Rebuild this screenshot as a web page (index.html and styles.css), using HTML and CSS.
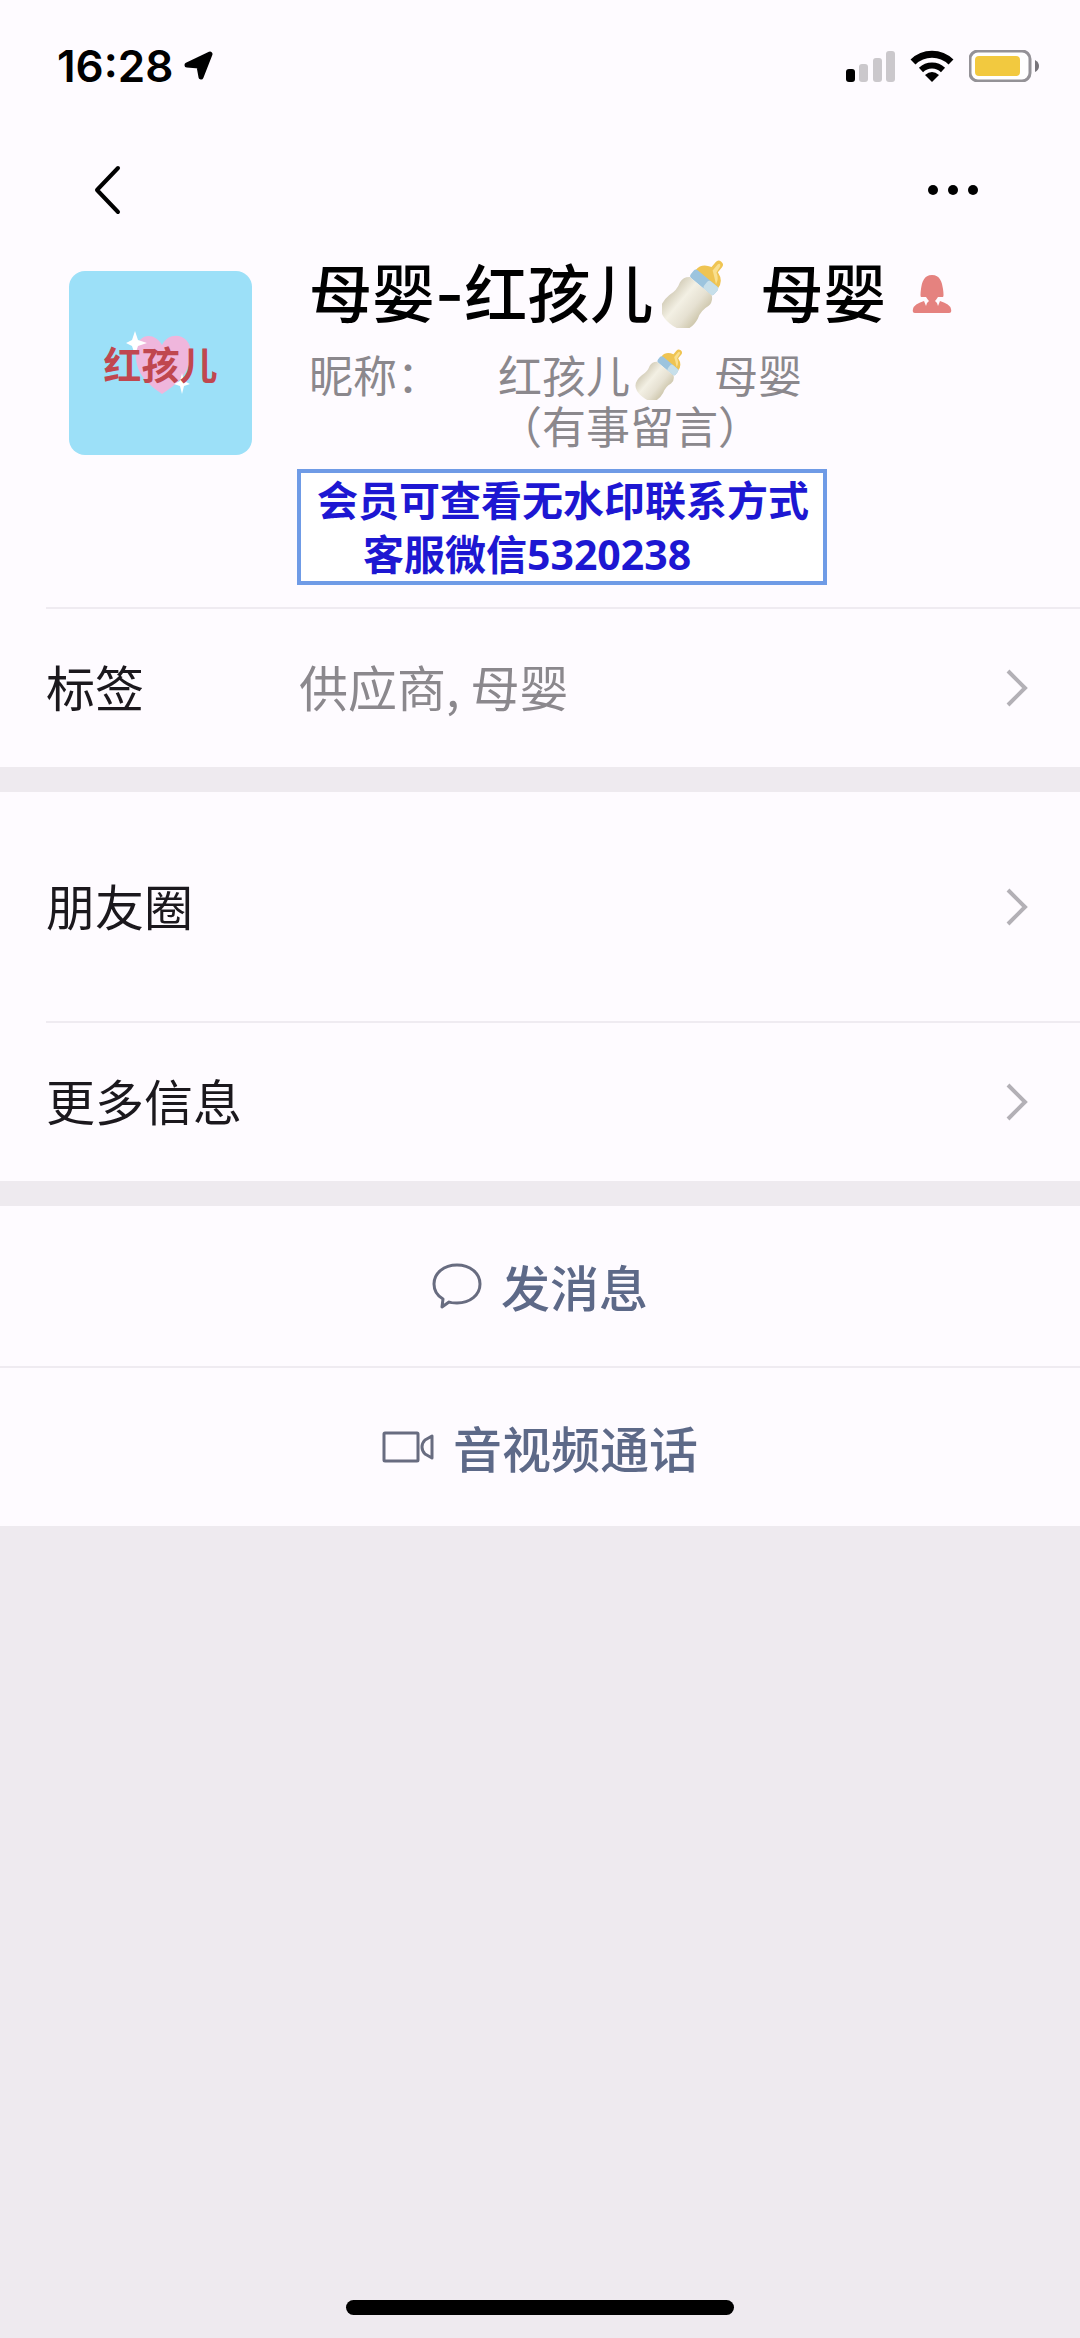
FILE: index.html
```html
<!DOCTYPE html>
<html lang="zh-CN">
<head>
<meta charset="utf-8">
<meta name="viewport" content="width=device-width, initial-scale=1">
<title>详细资料</title>
<link rel="stylesheet" href="styles.css">
</head>
<body>
<svg class="defs" width="0" height="0" aria-hidden="true">
  <defs>
    <linearGradient id="milk" x1="0" y1="0" x2="1" y2="0">
      <stop offset="0" stop-color="#d5cfbb"/>
      <stop offset="0.35" stop-color="#f3f0e4"/>
      <stop offset="0.7" stop-color="#e6e1d2"/>
      <stop offset="1" stop-color="#cfc8ae"/>
    </linearGradient>
    <symbol id="bottle" viewBox="0 0 64 66">
      <g transform="translate(28 37) rotate(40)">
        <path d="M-4 -42 q0 -4 4 -4 q4 0 4 4 l0 6 q10 3 10 12 h-28 q0 -9 10 -12 z" fill="#efc453"/>
        <path d="M-1 -42 q1 -3 3 0 l1 7 q6 3 7 9 q-8 -6 -11 -8 z" fill="#f9df8f"/>
        <rect x="-15" y="-25" width="30" height="10" rx="3" fill="#9cc4de"/>
        <rect x="2" y="-25" width="13" height="10" rx="3" fill="#c7dfea"/>
        <path d="M-14 -15 h28 q5 4 4 10 q-3 8 0 16 q4 21 -18 21 q-22 0 -18 -21 q3 -8 0 -16 q-1 -6 4 -10 z" fill="url(#milk)"/>
      </g>
    </symbol>
    <symbol id="chevron" viewBox="0 0 22 40">
      <path d="M2 3 L19 20 L2 37" fill="none" stroke="#b3b0b6" stroke-width="4"/>
    </symbol>
  </defs>
</svg>

<div class="page">
  <header class="top">
    <div class="status">
      <div class="status-left">
        <span class="time">16:28</span>
        <svg width="30" height="30" viewBox="0 0 30 30" aria-hidden="true"><path d="M26 3 L17 26 L15 15 L3 14 Z" fill="#000" stroke="#000" stroke-width="5" stroke-linejoin="round"/></svg>
      </div>
      <div class="status-right">
        <svg width="49" height="32" viewBox="0 0 49 32" aria-hidden="true">
          <rect x="0" y="19" width="9" height="13" rx="3" fill="#000"/>
          <rect x="13" y="14" width="9" height="18" rx="3" fill="#cbc8cc"/>
          <rect x="27" y="8" width="9" height="24" rx="3" fill="#cbc8cc"/>
          <rect x="40" y="1" width="9" height="31" rx="3" fill="#cbc8cc"/>
        </svg>
        <svg width="44" height="32" viewBox="0 0 44 32" aria-hidden="true">
          <path d="M3 12 A27 27 0 0 1 41 12" fill="none" stroke="#000" stroke-width="7"/>
          <path d="M11 20 A16 16 0 0 1 33 20" fill="none" stroke="#000" stroke-width="6"/>
          <path d="M22 32 L15 25 Q22 19 29 25 Z" fill="#000"/>
        </svg>
        <svg width="70" height="32" viewBox="0 0 70 32" aria-hidden="true">
          <rect x="1" y="1" width="60" height="30" rx="8" fill="#fff" stroke="#949297" stroke-width="3"/>
          <rect x="6" y="6" width="45" height="20" rx="4" fill="#f2c93f"/>
          <path d="M66 10 Q70 12 70 16 Q70 20 66 22 Z" fill="#77747a"/>
        </svg>
      </div>
    </div>
    <nav class="nav">
      <button class="icon-button" type="button" aria-label="返回">
        <svg width="28" height="52" viewBox="0 0 28 52"><path d="M25 4 L4 26 L25 48" fill="none" stroke="#000" stroke-width="4" stroke-linecap="round" stroke-linejoin="round"/></svg>
      </button>
      <button class="icon-button" type="button" aria-label="更多">
        <svg width="52" height="12" viewBox="0 0 52 12"><circle cx="6" cy="6" r="5"/><circle cx="26" cy="6" r="5"/><circle cx="46" cy="6" r="5"/></svg>
      </button>
    </nav>
  </header>

  <main>
    <section class="profile">
      <div class="avatar">
        <svg class="avatar-heart" width="72" height="72" viewBox="0 0 72 72" aria-hidden="true">
          <path d="M36 67 C22 57 8 46 10 24 C12 4 30 6 36 18 C43 3 66 6 65 28 C64 46 50 58 36 67 Z" fill="#efb6dc"/>
          <path d="M9 4 l3 9 l9 3 l-9 3 l-3 9 l-3 -9 l-6 -3 l6 -3 z" fill="#fff"/>
          <path d="M56 46 l2 8 l6 3 l-6 2 l-2 8 l-2 -8 l-6 -2 l6 -3 z" fill="#fff"/>
        </svg>
        <span class="avatar-text">红孩儿</span>
      </div>
      <div class="info">
        <h1 class="name">
          <span>母婴-红孩儿</span>
          <svg class="bottle-large" role="img" aria-label="奶瓶"><use href="#bottle"/></svg>
          <span>母婴</span>
          <svg class="gender" width="40" height="40" viewBox="0 0 40 40" role="img" aria-label="女">
            <path d="M20 1 C12 1 10 8 9 15 Q8 22 9 23 H14 Q16 26 17 27 Q14 29 14 32 L12 27 Q2 30 1 35 Q0 39 3 39 H37 Q40 39 39 35 Q38 30 28 27 L26 32 Q26 29 23 27 Q24 26 26 23 H31 Q32 22 31 15 C30 8 28 1 20 1 Z" fill="#e5827f"/>
          </svg>
        </h1>
        <dl class="nickname">
          <dt>昵称：</dt>
          <dd>
            <div class="nickname-line">
              <span>红孩儿</span>
              <svg class="bottle-small" role="img" aria-label="奶瓶"><use href="#bottle"/></svg>
              <span>母婴</span>
            </div>
            <div class="nickname-line">（有事留言）</div>
          </dd>
        </dl>
        <p class="notice">
          <span>会员可查看无水印联系方式</span>
          <span class="notice-contact">客服微信5320238</span>
        </p>
      </div>
    </section>

    <section class="group">
      <a class="row" href="#tags">
        <span class="row-label">标签</span>
        <span class="row-value">供应商, 母婴</span>
        <svg class="chevron" aria-hidden="true"><use href="#chevron"/></svg>
      </a>
    </section>

    <section class="group spaced">
      <a class="row row-tall" href="#moments">
        <span class="row-label">朋友圈</span>
        <svg class="chevron" aria-hidden="true"><use href="#chevron"/></svg>
      </a>
      <a class="row" href="#more">
        <span class="row-label">更多信息</span>
        <svg class="chevron" aria-hidden="true"><use href="#chevron"/></svg>
      </a>
    </section>

    <section class="group spaced">
      <button class="action" type="button">
        <svg width="50" height="48" viewBox="0 0 50 48" aria-hidden="true"><path d="M10 45 L11 37 C4 33 2 28 2 22 C2 11 12 3 25 3 C38 3 48 11 48 22 C48 33 38 41 25 41 C22 41 19 41 17 40 Z" fill="none" stroke="#686c80" stroke-width="3" stroke-linejoin="round"/></svg>
        <span>发消息</span>
      </button>
      <button class="action" type="button">
        <svg width="52" height="32" viewBox="0 0 52 32" aria-hidden="true"><g fill="none" stroke="#686c80" stroke-width="3" stroke-linejoin="round"><rect x="2" y="2" width="34" height="28" rx="1"/><path d="M50 5 V27 L43 23 Q40 20 40 16 Q40 12 43 9 Z"/></g></svg>
        <span>音视频通话</span>
      </button>
    </section>
  </main>

  <footer class="home"><div class="home-bar"></div></footer>
</div>
</body>
</html>
```
FILE: styles.css
```css
:root {
  --surface: #fefbff;
  --canvas: #eeeaef;
  --line: #efebf1;
  --muted: #8b888d;
  --ink: #1b181d;
  --link: #5d6988;
}

* {
  box-sizing: border-box;
}

body {
  margin: 0;
  background: var(--canvas);
  color: var(--ink);
  font-family: "Noto Sans CJK SC", sans-serif;
}

svg {
  display: block;
  flex: none;
}

.defs {
  position: absolute;
}

.page {
  display: flex;
  flex-direction: column;
  min-height: 100vh;
}

.top,
.profile,
.group {
  background: var(--surface);
}

.status {
  display: flex;
  align-items: center;
  justify-content: space-between;
  height: 132px;
  padding: 0 41px 0 57px;
}

.status-left {
  display: flex;
  align-items: center;
  gap: 11px;
}

.time {
  color: #000;
  font: 600 44px/1 Inter, sans-serif;
}

.status-right {
  display: flex;
  align-items: center;
  gap: 15px;
}

.nav {
  display: flex;
  align-items: center;
  justify-content: space-between;
  height: 116px;
  padding: 0 101px 0 93px;
}

.icon-button {
  padding: 0;
  border: 0;
  background: none;
}

.profile {
  display: flex;
  gap: 57px;
  padding: 0 46px 22px 69px;
}

.avatar {
  position: relative;
  display: flex;
  flex: none;
  align-items: center;
  justify-content: center;
  width: 183px;
  height: 184px;
  margin-top: 23px;
  border-radius: 16px;
  background: #9ce0f8;
}

.avatar-heart {
  position: absolute;
  top: 56px;
  left: 57px;
}

.avatar-text {
  position: relative;
  color: #c0474f;
  font-size: 38px;
  font-weight: 700;
  line-height: 40px;
}

.info {
  flex: 1;
  min-width: 0;
}

.name {
  display: flex;
  align-items: center;
  margin: 0;
  color: #000;
  font-family: Inter, "Noto Sans CJK SC", sans-serif;
  font-size: 63px;
  font-weight: 500;
  line-height: 92px;
  white-space: nowrap;
}

.bottle-large {
  width: 66px;
  height: 68px;
  margin: 0 32px 0 9px;
}

.gender {
  margin-left: 26px;
}

.nickname {
  display: flex;
  margin: 9px 0 0;
  color: var(--muted);
  font-size: 44px;
  line-height: 51px;
  white-space: nowrap;
}

.nickname dt {
  width: 189px;
}

.nickname dd {
  margin: 0;
}

.nickname-line {
  display: flex;
  align-items: center;
}

.bottle-small {
  width: 54px;
  height: 51px;
  margin: 0 26px 0 4px;
}

.notice {
  display: flex;
  flex-direction: column;
  width: max-content;
  margin: 18px 0 0 -12px;
  padding: 0 14px 0 16px;
  border: 4px solid #6f9be6;
  background: #fff;
  color: #1d17d2;
  font-family: "Noto Sans", "Noto Sans CJK SC", sans-serif;
  font-size: 41px;
  font-weight: 700;
  line-height: 54px;
}

.notice-contact {
  padding-left: 46px;
}

.spaced {
  margin-top: 25px;
}

.row {
  display: flex;
  align-items: center;
  height: 160px;
  margin-left: 46px;
  padding-right: 52px;
  border-top: 2px solid var(--line);
  color: var(--ink);
  font-size: 49px;
  line-height: 64px;
  text-decoration: none;
}

.row-tall {
  height: 229px;
  border-top: 0;
}

.row-label,
.row-value {
  padding-bottom: 4px;
}

.row-label {
  min-width: 253px;
}

.row-value {
  color: var(--muted);
}

.chevron {
  width: 22px;
  height: 40px;
  margin-left: auto;
}

.action {
  display: flex;
  align-items: center;
  justify-content: center;
  gap: 19px;
  width: 100%;
  height: 160px;
  padding: 0;
  border: 0;
  background: none;
  color: var(--link);
  font-family: inherit;
  font-size: 49px;
  font-weight: 500;
  line-height: 64px;
}

.action + .action {
  border-top: 2px solid var(--line);
}

.home {
  display: flex;
  justify-content: center;
  margin-top: auto;
  padding: 23px 0;
}

.home-bar {
  width: 36%;
  height: 15px;
  border-radius: 8px;
  background: #000;
}
```
